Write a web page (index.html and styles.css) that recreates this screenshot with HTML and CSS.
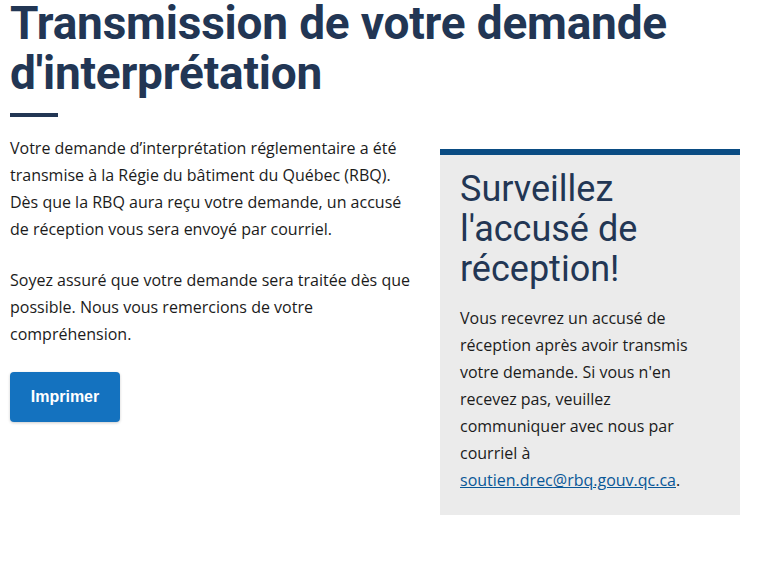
FILE: index.html
```html
<!DOCTYPE html>
<html lang="fr">
<head>
<meta charset="utf-8">
<title>Transmission de votre demande d'interprétation</title>
<link rel="stylesheet" href="styles.css">
</head>
<body>
<main class="page">
  <h1 class="title">Transmission de votre demande d'interprétation</h1>
  <div class="rule"></div>
  <div class="columns">
    <section class="main-col">
      <p>Votre demande d’interprétation réglementaire a été transmise à la Régie du bâtiment du Québec (RBQ). Dès que la RBQ aura reçu votre demande, un accusé de réception vous sera envoyé par courriel.</p>
      <p>Soyez assuré que votre demande sera traitée dès que possible. Nous vous remercions de votre compréhension.</p>
      <button class="btn" type="button">Imprimer</button>
    </section>
    <aside class="notice">
      <h2 class="notice-title">Surveillez l'accusé de réception!</h2>
      <p>Vous recevrez un accusé de réception après avoir transmis votre demande. Si vous n'en recevez pas, veuillez communiquer avec nous par courriel à <a href="#">soutien.drec@rbq.gouv.qc.ca</a>.</p>
    </aside>
  </div>
</main>
</body>
</html>
```
FILE: styles.css
```css
html, body {
  margin: 0;
  padding: 0;
  background: #ffffff;
}

body {
  font-family: "Open Sans", "Liberation Sans", sans-serif;
  font-size: 16px;
  line-height: 27px;
  color: #1b1b1b;
}

.page {
  padding: 0 10px;
}

.title {
  font-family: Roboto, "Liberation Sans", sans-serif;
  font-weight: 700;
  font-size: 46px;
  line-height: 50px;
  color: #223654;
  margin: -2px 0 0 0;
  letter-spacing: -0.2px;
}

.rule {
  width: 48px;
  height: 4px;
  background: #223654;
  margin-top: 15px;
}

.columns {
  display: grid;
  grid-template-columns: 400px 300px;
  column-gap: 30px;
  align-items: start;
  margin-top: 16px;
}

.main-col {
  padding-top: 2px;
}

.main-col p {
  margin: 0 0 24px 0;
}

.btn {
  display: block;
  width: 110px;
  height: 50px;
  border: none;
  border-radius: 4px;
  background: #1472bf;
  color: #ffffff;
  font-family: "Liberation Sans", Arial, sans-serif;
  font-weight: 700;
  font-size: 16px;
  box-shadow: 0 1px 3px rgba(0, 0, 0, 0.2);
  padding: 0;
  margin-top: 24px;
}

.notice {
  margin-top: 16px;
  background: #ebebeb;
  border-top: 6px solid #0a4c83;
  padding: 14px 20px 21px 20px;
}

.notice-title {
  font-family: Roboto, "Liberation Sans", sans-serif;
  font-weight: 400;
  font-size: 36px;
  line-height: 40px;
  color: #223654;
  margin: 0 0 16px 0;
}

.notice p {
  margin: 0;
}

.notice a {
  color: #095797;
  text-decoration: underline;
}
```
